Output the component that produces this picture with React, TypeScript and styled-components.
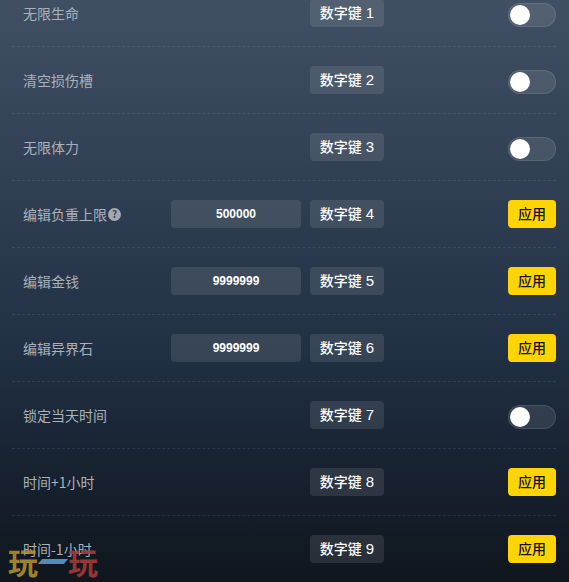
import React from "react";
import styled, { createGlobalStyle } from "styled-components";

const GlobalStyle = createGlobalStyle`
  html, body {
    margin: 0;
    height: 100%;
    overflow: hidden;
    background: #10171f;
  }
  body {
    font-family: "Noto Sans CJK SC", "Liberation Sans", sans-serif;
  }
`;

const Page = styled.div`
  position: relative;
  width: 569px;
  height: 582px;
  overflow: hidden;
  background: linear-gradient(#404f63 0%, #2d3c50 37%, #213044 60%, #141d29 88%, #0f161d 100%);
`;

// the list is scrolled, first row is cut by the top edge
const List = styled.div`
  margin-top: -20px;
  padding: 0 13px 0 12px;
`;

const Row = styled.div<{ $last?: boolean }>`
  display: grid;
  grid-template-columns: 148px 139px 1fr auto;
  align-items: center;
  height: 66px;
  padding-left: 11px;
  border-bottom: 1px dashed ${(p) => (p.$last ? "transparent" : "rgba(255, 255, 255, 0.09)")};
`;

const Label = styled.div`
  display: flex;
  align-items: center;
  font-size: 14px;
  color: #a9b1bb;
`;

const Help = styled.span`
  display: inline-flex;
  align-items: center;
  justify-content: center;
  width: 13px;
  height: 13px;
  margin-left: 1px;
  border-radius: 50%;
  background: #a3a9b2;
  color: #3a4656;
  font-size: 10px;
  font-weight: 700;
  line-height: 1;
`;

const ValueBox = styled.div`
  grid-column: 2;
  box-sizing: border-box;
  width: 130px;
  height: 28px;
  padding-bottom: 1px;
  display: flex;
  align-items: center;
  justify-content: center;
  border-radius: 4px;
  background: rgba(255, 255, 255, 0.1);
  color: #fff;
  font-family: "Liberation Sans", sans-serif;
  font-size: 12px;
  font-weight: 700;
`;

const KeyTag = styled.div`
  grid-column: 3;
  justify-self: start;
  box-sizing: border-box;
  width: 74px;
  height: 28px;
  padding-bottom: 2px;
  display: flex;
  align-items: center;
  justify-content: center;
  gap: 4px;
  border-radius: 4px;
  background: rgba(255, 255, 255, 0.1);
  color: #fff;
  font-size: 14px;
  font-weight: 500;
`;

const KeyNum = styled.span`
  font-family: "Liberation Sans", sans-serif;
  font-size: 15px;
  font-weight: 400;
`;

const Toggle = styled.div`
  grid-column: 4;
  justify-self: end;
  box-sizing: border-box;
  width: 48px;
  height: 24px;
  padding: 1px;
  border-radius: 12px;
  background: rgba(255, 255, 255, 0.1);
  border: 1px solid rgba(255, 255, 255, 0.1);
  margin-top: 4px;
`;

const Knob = styled.div`
  width: 20px;
  height: 20px;
  border-radius: 50%;
  background: #fff;
`;

const ApplyButton = styled.button`
  grid-column: 4;
  justify-self: end;
  width: 48px;
  height: 28px;
  padding: 0 0 2px;
  border: 0;
  border-radius: 4px;
  background: #ffd400;
  color: #111;
  font-family: inherit;
  font-size: 14px;
  font-weight: 500;
`;

const Watermark = styled.div`
  position: absolute;
  left: 8px;
  top: 544px;
  display: flex;
  align-items: center;
  height: 34px;
  font-size: 30px;
  font-weight: 700;
  line-height: 34px;
`;

const MarkChar = styled.span<{ $color: string }>`
  color: ${(p) => p.$color};
  opacity: 0.85;
`;

const Stroke = styled.span`
  display: block;
  width: 26px;
  height: 5px;
  margin: 1px 2px 0 2px;
  background: #4d8db8;
  transform: skewX(-40deg);
`;

type Item = {
  label: string;
  num: number;
  help?: boolean;
  value?: string;
  action: "toggle" | "apply";
};

const items: Item[] = [
  { label: "无限生命", num: 1, action: "toggle" },
  { label: "清空损伤槽", num: 2, action: "toggle" },
  { label: "无限体力", num: 3, action: "toggle" },
  { label: "编辑负重上限", num: 4, help: true, value: "500000", action: "apply" },
  { label: "编辑金钱", num: 5, value: "9999999", action: "apply" },
  { label: "编辑异界石", num: 6, value: "9999999", action: "apply" },
  { label: "锁定当天时间", num: 7, action: "toggle" },
  { label: "时间+1小时", num: 8, action: "apply" },
  { label: "时间-1小时", num: 9, action: "apply" },
];

export default function App() {
  return (
    <Page>
      <GlobalStyle />
      <List>
        {items.map((item, i) => (
          <Row key={item.num} $last={i === items.length - 1}>
            <Label>
              {item.label}
              {item.help && <Help>?</Help>}
            </Label>
            {item.value && <ValueBox>{item.value}</ValueBox>}
            <KeyTag>
              数字键 <KeyNum>{item.num}</KeyNum>
            </KeyTag>
            {item.action === "toggle" ? (
              <Toggle>
                <Knob />
              </Toggle>
            ) : (
              <ApplyButton>应用</ApplyButton>
            )}
          </Row>
        ))}
      </List>
      <Watermark>
        <MarkChar $color="#b8952a">玩</MarkChar>
        <Stroke />
        <MarkChar $color="#b03a3a">玩</MarkChar>
      </Watermark>
    </Page>
  );
}
